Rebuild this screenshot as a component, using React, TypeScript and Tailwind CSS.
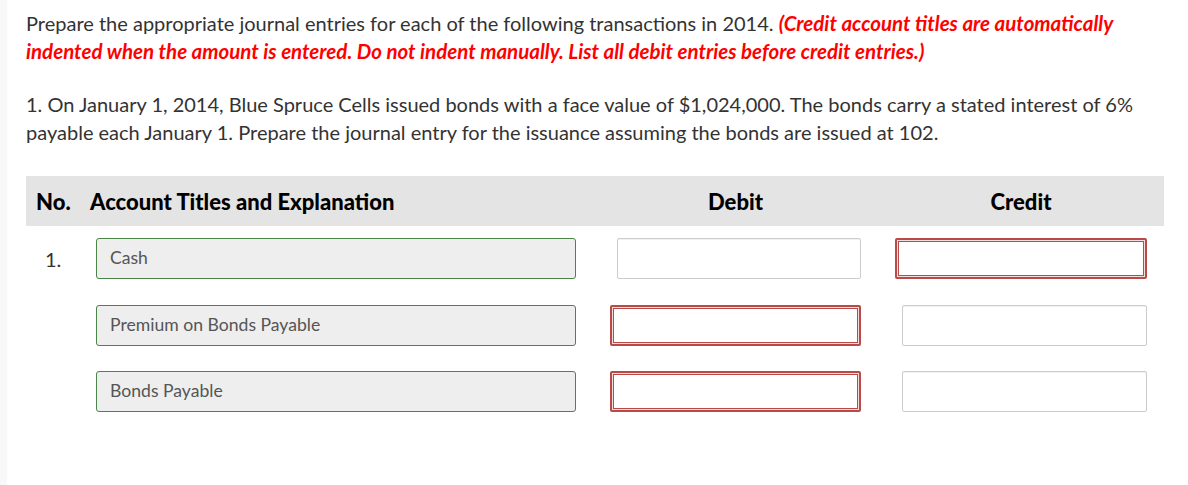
const rows = [
  { no: "1.", account: "Cash", debitErr: false, creditErr: true },
  { no: "", account: "Premium on Bonds Payable", debitErr: true, creditErr: false },
  { no: "", account: "Bonds Payable", debitErr: true, creditErr: false },
];

const AmountBox = ({ error }: { error: boolean }) =>
  error ? (
    <div className="h-[41px] w-full rounded-[2px] border-2 border-[#b94a48] bg-[#f3dede] p-[1px]">
      <div className="h-full w-full border border-[#b94a48] bg-white" />
    </div>
  ) : (
    <div className="ml-[7px] h-[41px] rounded-[2px] border border-[#cccccc] bg-white shadow-[inset_0_1px_1px_rgba(0,0,0,0.06)]" />
  );

export default function App() {
  return (
    <div className="flex min-h-[485px] w-[1188px] bg-white font-['Lato','Open_Sans',sans-serif] text-[#333333]">
      <div className="w-[7px] shrink-0 bg-[#f8f8f8]" />
      <div className="w-[1157px] pl-[19px]">
        <p className="pt-[10px] text-[20px] leading-[27.5px]">
          Prepare the appropriate journal entries for each of the following transactions in 2014.{" "}
          <span className="text-[20.5px] font-bold italic text-[#ff0000]">
            (Credit account titles are automatically indented when the amount is entered. Do not indent manually. List all debit entries before credit entries.)
          </span>
        </p>
        <p className="mt-[26px] text-[20px] leading-[27.5px]">
          1. On January 1, 2014, Blue Spruce Cells issued bonds with a face value of $1,024,000. The bonds carry a stated interest of 6% payable each January 1. Prepare the journal entry for the issuance assuming the bonds are issued at 102.
        </p>

        <div className="mt-[30px] flex h-[50px] items-center bg-[#e4e4e4] text-[22px] font-black text-black">
          <div className="w-[64px] pl-[10px]">No.</div>
          <div className="w-[486px]">Account Titles and Explanation</div>
          <div className="ml-[34px] w-[251px] text-center">Debit</div>
          <div className="ml-[34px] w-[252px] text-center">Credit</div>
        </div>

        <div className="mt-[12px] flex flex-col gap-[25.5px]">
          {rows.map((r, i) => (
            <div key={i} className="flex items-center">
              <div className="w-[70px] pl-[19px] text-[20px]">{r.no}</div>
              <div className="flex h-[41px] w-[480px] items-center rounded-[3px] border border-[#4a8446] bg-[#eeeeee] pl-[13px] text-[17.6px] text-[#555555]">
                {r.account}
              </div>
              <div className="ml-[34px] w-[251px]">
                <AmountBox error={r.debitErr} />
              </div>
              <div className="ml-[34px] w-[252px]">
                <AmountBox error={r.creditErr} />
              </div>
            </div>
          ))}
        </div>
      </div>
    </div>
  );
}
